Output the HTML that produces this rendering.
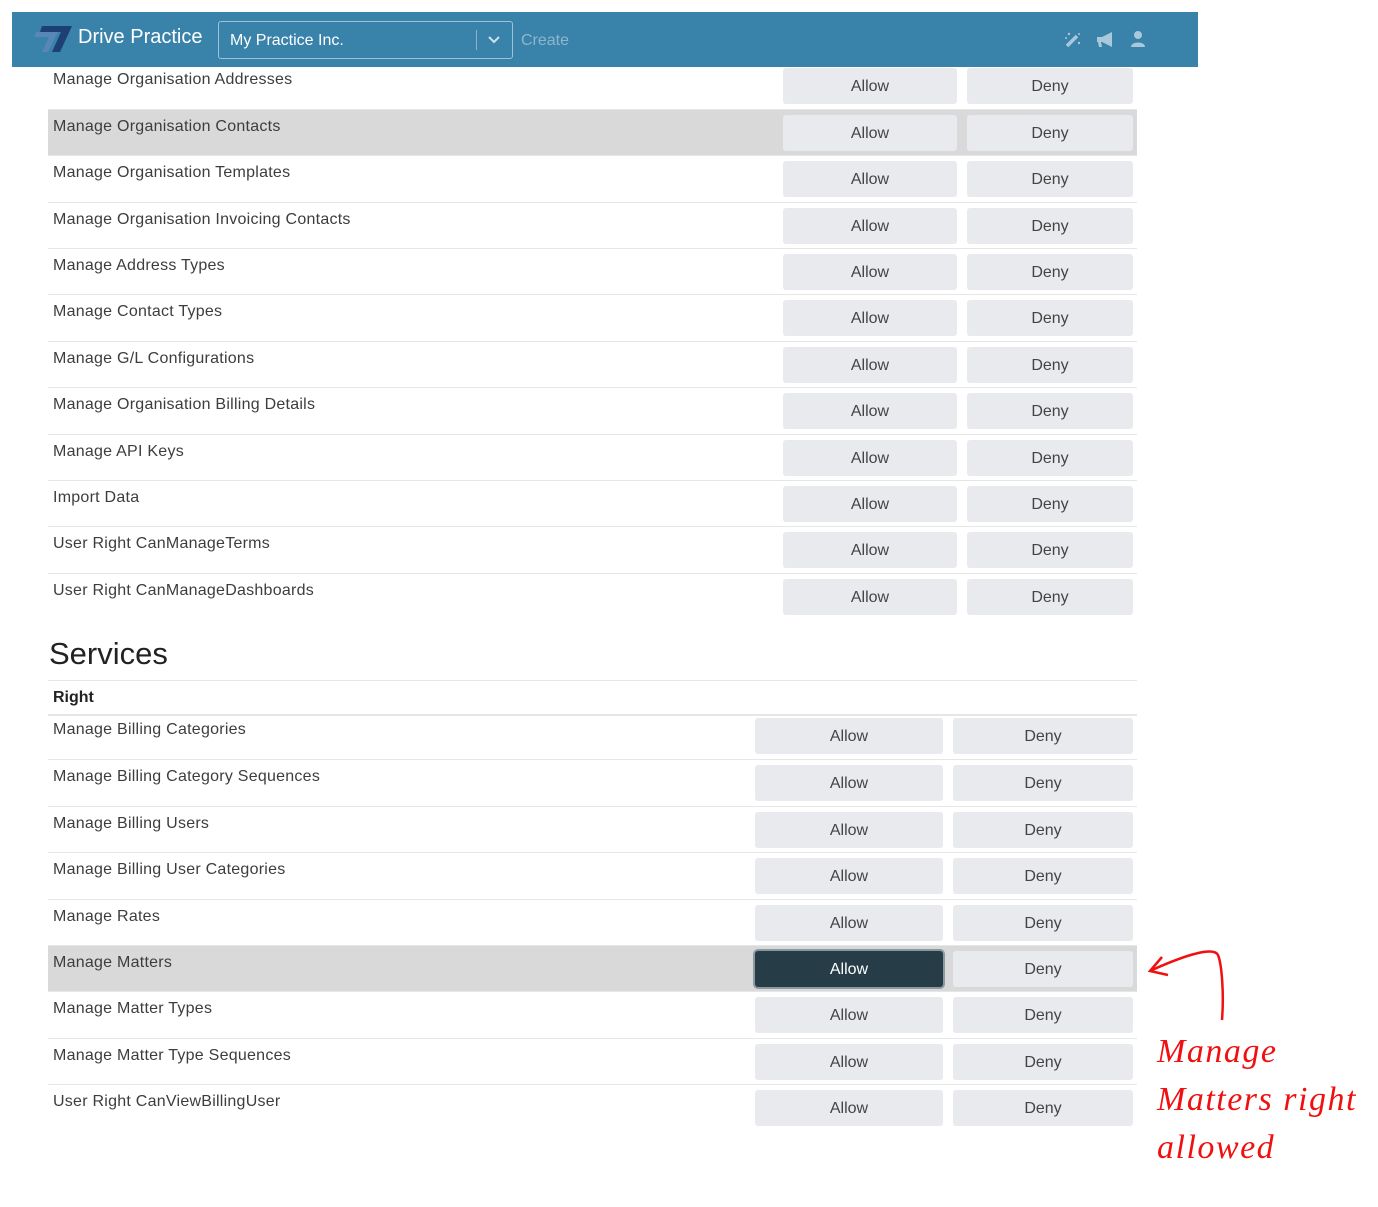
<!DOCTYPE html>
<html><head><meta charset="utf-8"><style>
body{margin:0;width:1378px;height:1207px;background:#fff;position:relative;overflow:hidden;font-family:"Liberation Sans",sans-serif;color:#3a3a3a}
.hdr{position:absolute;left:12px;top:12px;width:1186px;height:55px;background:#3982a9;z-index:5}
.r{position:absolute;left:48px;width:1089px;height:46px;border-top:1px solid #e6e6e6}
.r.h{background:#d9d9d9}
.t{position:absolute;left:5px;top:8px;font-size:16px;letter-spacing:0.25px;color:#3d3d3d}
.b{position:absolute;top:5px;height:36px;background:#e8eaed;border-radius:3px;font-size:16px;text-align:center;line-height:37px;color:#444}
.a1{left:735px;width:174px}.d1{left:919px;width:166px}
.a2{left:707px;width:188px}.d2{left:905px;width:180px}
.on{background:#263c46;color:#fff;box-shadow:0 0 0 2px #8a9a9f}
</style></head><body>
<div class="hdr">
<svg style="position:absolute;left:22px;top:12px" width="40" height="30" viewBox="0 0 40 30"><path d="M8 2H38L26 28H18L27 8H6Z" fill="#1d3f73"/><path d="M2 8H24L14 28H8L15 13H0Z" fill="#5b86b8" opacity=".9"/></svg>
<div style="position:absolute;left:66px;top:14px;font-size:20px;color:#fff">Drive Practice</div>
<div style="position:absolute;left:206px;top:9px;width:293px;height:36px;border:1px solid #9fc2d6;border-radius:3px"></div>
<div style="position:absolute;left:218px;top:20px;font-size:16px;color:#fff">My Practice Inc.</div>
<div style="position:absolute;left:464px;top:18px;width:1px;height:20px;background:#8bb3c9"></div>
<svg style="position:absolute;left:476px;top:24px" width="12" height="8"><path d="M1 1L6 6L11 1" stroke="#cfe1ec" stroke-width="2" fill="none"/></svg>
<div style="position:absolute;left:509px;top:20px;font-size:16px;color:#8fb6cd">Create</div>
<svg style="position:absolute;left:1052px;top:19px" width="18" height="18" viewBox="0 0 18 18"><path d="M3 15L13 5" stroke="#a9c8da" stroke-width="3.5"/><circle cx="5" cy="3" r="1.2" fill="#a9c8da"/><circle cx="15" cy="12" r="1.2" fill="#a9c8da"/><circle cx="2" cy="7" r="1" fill="#a9c8da"/><circle cx="15" cy="3" r="1" fill="#a9c8da"/></svg>
<svg style="position:absolute;left:1084px;top:19px" width="20" height="18" viewBox="0 0 20 18"><path d="M1 6H6L16 1V16L6 11H5L6 16H3L2 11H1Z" fill="#a9c8da"/></svg>
<svg style="position:absolute;left:1118px;top:18px" width="16" height="18" viewBox="0 0 16 18"><circle cx="8" cy="5" r="4" fill="#a9c8da"/><path d="M1 17C1 11 15 11 15 17Z" fill="#a9c8da"/></svg>
</div>

<div class="r" style="top:63px;border:0"><span class="t">Manage Organisation Addresses</span><div class="b a1">Allow</div><div class="b d1">Deny</div></div>
<div class="r h" style="top:109px"><span class="t">Manage Organisation Contacts</span><div class="b a1">Allow</div><div class="b d1">Deny</div></div>
<div class="r" style="top:155px"><span class="t">Manage Organisation Templates</span><div class="b a1">Allow</div><div class="b d1">Deny</div></div>
<div class="r" style="top:202px"><span class="t">Manage Organisation Invoicing Contacts</span><div class="b a1">Allow</div><div class="b d1">Deny</div></div>
<div class="r" style="top:248px"><span class="t">Manage Address Types</span><div class="b a1">Allow</div><div class="b d1">Deny</div></div>
<div class="r" style="top:294px"><span class="t">Manage Contact Types</span><div class="b a1">Allow</div><div class="b d1">Deny</div></div>
<div class="r" style="top:341px"><span class="t">Manage G/L Configurations</span><div class="b a1">Allow</div><div class="b d1">Deny</div></div>
<div class="r" style="top:387px"><span class="t">Manage Organisation Billing Details</span><div class="b a1">Allow</div><div class="b d1">Deny</div></div>
<div class="r" style="top:434px"><span class="t">Manage API Keys</span><div class="b a1">Allow</div><div class="b d1">Deny</div></div>
<div class="r" style="top:480px"><span class="t">Import Data</span><div class="b a1">Allow</div><div class="b d1">Deny</div></div>
<div class="r" style="top:526px"><span class="t">User Right CanManageTerms</span><div class="b a1">Allow</div><div class="b d1">Deny</div></div>
<div class="r" style="top:573px"><span class="t">User Right CanManageDashboards</span><div class="b a1">Allow</div><div class="b d1">Deny</div></div>

<div style="position:absolute;left:49px;top:636px;font-size:31px;color:#222">Services</div>
<div style="position:absolute;left:48px;top:680px;width:1089px;height:33px;border-top:1px solid #e6e6e6;border-bottom:2px solid #e6e6e6"><span style="position:absolute;left:5px;top:8px;font-size:16px;font-weight:bold;color:#222">Right</span></div>

<div class="r" style="top:713px;border:0"><span class="t">Manage Billing Categories</span><div class="b a2">Allow</div><div class="b d2">Deny</div></div>
<div class="r" style="top:759px"><span class="t">Manage Billing Category Sequences</span><div class="b a2">Allow</div><div class="b d2">Deny</div></div>
<div class="r" style="top:806px"><span class="t">Manage Billing Users</span><div class="b a2">Allow</div><div class="b d2">Deny</div></div>
<div class="r" style="top:852px"><span class="t">Manage Billing User Categories</span><div class="b a2">Allow</div><div class="b d2">Deny</div></div>
<div class="r" style="top:899px"><span class="t">Manage Rates</span><div class="b a2">Allow</div><div class="b d2">Deny</div></div>
<div class="r h" style="top:945px"><span class="t">Manage Matters</span><div class="b a2 on">Allow</div><div class="b d2">Deny</div></div>
<div class="r" style="top:991px"><span class="t">Manage Matter Types</span><div class="b a2">Allow</div><div class="b d2">Deny</div></div>
<div class="r" style="top:1038px"><span class="t">Manage Matter Type Sequences</span><div class="b a2">Allow</div><div class="b d2">Deny</div></div>
<div class="r" style="top:1084px"><span class="t">User Right CanViewBillingUser</span><div class="b a2">Allow</div><div class="b d2">Deny</div></div>

<svg style="position:absolute;left:1140px;top:945px" width="100" height="80"><path d="M82 75C84 50 82 20 78 10C74 2 50 8 12 25" stroke="#f01010" stroke-width="2.5" fill="none"/><path d="M22 12L10 26L28 30" stroke="#f01010" stroke-width="2.5" fill="none"/></svg>
<div style="position:absolute;left:1157px;top:1028px;font-family:'Liberation Serif',serif;font-style:italic;font-size:34px;letter-spacing:1.5px;line-height:48px;color:#f01010">Manage<br>Matters right<br>allowed</div>
</body></html>
